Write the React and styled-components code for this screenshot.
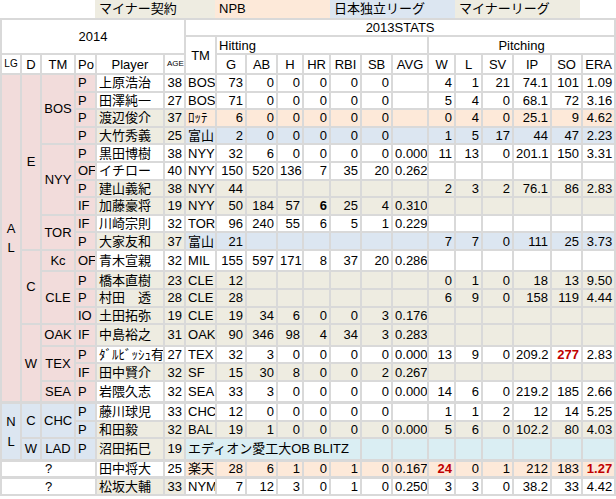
import React from "react";
import styled, { createGlobalStyle } from "styled-components";

const Global = createGlobalStyle`
  body { margin: 0; background: #fff; font-family: "Liberation Sans", "Noto Sans CJK JP", sans-serif; font-size: 13px; color: #000; }
`;

const C = {
  pink: "#f2dcdb",
  npb: "#fde9d9",
  ind: "#dce6f1",
  tan: "#eeece1",
  cyan: "#daeef3",
  white: "#fff",
  line: "#d9d9d9",
  red: "#c00000",
};

const Legend = styled.div`
  display: flex;
  height: 18px;
  line-height: 18px;
`;

const Swatch = styled.div`
  width: ${(p) => p.w}px;
  background: ${(p) => p.bg};
  padding-left: 4px;
  box-sizing: border-box;
`;

const Table = styled.table`
  border-collapse: collapse;
  table-layout: fixed;
  width: 616px;
  border: 2px solid ${C.line};
`;

const Tr = styled.tr`
  height: ${(p) => p.h || 17.6}px;
  border-top: ${(p) => (p.sep ? `3px solid ${C.line}` : "none")};
`;

const Td = styled.td`
  border: 2px solid ${C.line};
  padding: 0 2px;
  line-height: 1;
  white-space: nowrap;
  overflow: ${(p) => (p.spill ? "visible" : "hidden")};
  background: ${(p) => p.bg || C.white};
  text-align: ${(p) => p.al || "right"};
  color: ${(p) => (p.red ? C.red : "#000")};
  font-weight: ${(p) => (p.bold || p.red ? "bold" : "normal")};
  font-size: ${(p) => p.fs || 13}px;
  vertical-align: middle;
`;

const widths = [20, 20, 34, 21, 68, 21, 31, 30, 31, 26, 27, 31, 31, 36, 27, 27, 31, 38, 31, 33];

const E = "";
// pb: player bg, sb: stats bg, s: G AB H HR RBI SB AVG W L SV IP SO ERA
const rows = [
  { po: "P", name: "上原浩治", age: 38, tm: "BOS", pb: C.white, sb: C.white, s: [73, 0, 0, 0, 0, 0, E, 4, 1, 21, "74.1", 101, "1.09"] },
  { po: "P", name: "田澤純一", age: 27, tm: "BOS", pb: C.white, sb: C.white, s: [71, 0, 0, 0, 0, 0, E, 5, 4, 0, "68.1", 72, "3.16"] },
  { po: "P", name: "渡辺俊介", age: 37, tm: "ﾛｯﾃ", pb: C.tan, sb: C.npb, s: [6, 0, 0, 0, 0, 0, E, 0, 4, 0, "25.1", 9, "4.62"] },
  { po: "P", name: "大竹秀義", age: 25, tm: "富山", pb: C.tan, sb: C.ind, s: [2, 0, 0, 0, 0, 0, E, 1, 5, 17, 44, 47, "2.23"] },
  { po: "P", name: "黒田博樹", age: 38, tm: "NYY", pb: C.white, sb: C.white, s: [32, 6, 0, 0, 0, 0, "0.000", 11, 13, 0, "201.1", 150, "3.31"] },
  { po: "OF", name: "イチロー", age: 40, tm: "NYY", pb: C.white, sb: C.white, s: [150, 520, 136, 7, 35, 20, "0.262", E, E, E, E, E, E] },
  { po: "P", name: "建山義紀", age: 38, tm: "NYY", pb: C.tan, sb: C.tan, s: [44, E, E, E, E, E, E, 2, 3, 2, "76.1", 86, "2.83"] },
  { po: "IF", name: "加藤豪将", age: 19, tm: "NYY", pb: C.tan, sb: C.tan, s: [50, 184, 57, 6, 25, 4, "0.310", E, E, E, E, E, E], boldHR: true },
  { po: "IF", name: "川崎宗則", age: 32, tm: "TOR", pb: C.white, sb: C.white, s: [96, 240, 55, 6, 5, 1, "0.229", E, E, E, E, E, E] },
  { po: "P", name: "大家友和", age: 37, tm: "富山", pb: C.tan, sb: C.ind, s: [21, E, E, E, E, E, E, 7, 7, 0, 111, 25, "3.73"] },
  { po: "OF", name: "青木宣親", age: 32, tm: "MIL", pb: C.white, sb: C.white, s: [155, 597, 171, 8, 37, 20, "0.286", E, E, E, E, E, E] },
  { po: "P", name: "橋本直樹", age: 23, tm: "CLE", pb: C.tan, sb: C.tan, s: [12, E, E, E, E, E, E, 0, 1, 0, 18, 13, "9.50"] },
  { po: "P", name: "村田　透", age: 28, tm: "CLE", pb: C.tan, sb: C.tan, s: [28, E, E, E, E, E, E, 6, 9, 0, 158, 119, "4.44"] },
  { po: "IO", name: "土田拓弥", age: 19, tm: "CLE", pb: C.tan, sb: C.tan, s: [19, 34, 6, 0, 0, 3, "0.176", E, E, E, E, E, E] },
  { po: "IF", name: "中島裕之", age: 31, tm: "OAK", pb: C.tan, sb: C.tan, s: [90, 346, 98, 4, 34, 3, "0.283", E, E, E, E, E, E] },
  { po: "P", name: "ﾀﾞﾙﾋﾞｯｼｭ有", age: 27, tm: "TEX", pb: C.white, sb: C.white, s: [32, 3, 0, 0, 0, 0, "0.000", 13, 9, 0, "209.2", 277, "2.83"], red: [11] },
  { po: "IF", name: "田中賢介", age: 32, tm: "SF", pb: C.tan, sb: C.tan, s: [15, 30, 8, 0, 0, 2, "0.267", E, E, E, E, E, E] },
  { po: "P", name: "岩隈久志", age: 32, tm: "SEA", pb: C.white, sb: C.white, s: [33, 3, 0, 0, 0, 0, "0.000", 14, 6, 0, "219.2", 185, "2.66"] },
  { po: "P", name: "藤川球児", age: 33, tm: "CHC", pb: C.white, sb: C.white, s: [12, 0, 0, 0, 0, 0, E, 1, 1, 2, 12, 14, "5.25"], sep: true },
  { po: "P", name: "和田毅", age: 32, tm: "BAL", pb: C.tan, sb: C.tan, s: [19, 1, 0, 0, 0, 0, "0.000", 5, 6, 0, "102.2", 80, "4.03"] },
  { po: "P", name: "沼田拓巳", age: 19, merged: "エディオン愛工大OB BLITZ", pb: C.tan, sb: C.cyan },
  { q: true, name: "田中将大", age: 25, tm: "楽天", pb: C.white, sb: C.npb, s: [28, 6, 1, 0, 1, 0, "0.167", 24, 0, 1, 212, 183, "1.27"], red: [7, 12], sep: true },
  { q: true, name: "松坂大輔", age: 33, tm: "NYM", pb: C.tan, sb: C.white, s: [7, 12, 3, 0, 1, 0, "0.250", 3, 3, 0, "38.2", 33, "4.42"], sep: true },
];

// league / division / team cells that start on a given row
const lead = {
  0: [
    { t: "A\nL", rs: 18, bg: C.pink },
    { t: "E", rs: 10, bg: C.pink },
    { t: "BOS", rs: 4, bg: C.pink },
  ],
  4: [{ t: "NYY", rs: 4, bg: C.pink }],
  8: [{ t: "TOR", rs: 2, bg: C.pink }],
  10: [
    { t: "C", rs: 4, bg: C.pink },
    { t: "Kc", rs: 1, bg: C.pink },
  ],
  11: [{ t: "CLE", rs: 3, bg: C.pink }],
  14: [
    { t: "W", rs: 4, bg: C.pink },
    { t: "OAK", rs: 1, bg: C.pink },
  ],
  15: [{ t: "TEX", rs: 2, bg: C.pink }],
  17: [{ t: "SEA", rs: 1, bg: C.pink }],
  18: [
    { t: "N\nL", rs: 3, bg: C.ind },
    { t: "C", rs: 2, bg: C.ind },
    { t: "CHC", rs: 2, bg: C.ind },
  ],
  20: [
    { t: "W", rs: 1, bg: C.ind },
    { t: "LAD", rs: 1, bg: C.ind },
  ],
};

const LeadText = styled.span`
  white-space: pre-line;
  line-height: 1.5;
`;

function DataRow({ r, i }) {
  const poBg = i >= 18 ? C.ind : C.pink;
  return (
    <Tr sep={r.sep}>
      {r.q ? (
        <Td colSpan={4} al="center">?</Td>
      ) : (
        <>
          {(lead[i] || []).map((c, k) => (
            <Td key={k} rowSpan={c.rs} bg={c.bg} al="center">
              <LeadText>{c.t}</LeadText>
            </Td>
          ))}
          <Td bg={poBg} al="left">{r.po}</Td>
        </>
      )}
      <Td bg={r.pb} al="left">{r.name}</Td>
      <Td bg={r.pb}>{r.age}</Td>
      {r.merged ? (
        <>
          <Td colSpan={6} bg={r.sb} al="left">{r.merged}</Td>
          {Array.from({ length: 8 }).map((_, k) => (
            <Td key={k} bg={r.sb} />
          ))}
        </>
      ) : (
        <>
          <Td bg={r.sb} al="left">{r.tm}</Td>
          {r.s.map((v, k) => (
            <Td key={k} bg={r.sb} red={r.red && r.red.includes(k)} bold={r.boldHR && k === 3}>
              {v}
            </Td>
          ))}
        </>
      )}
    </Tr>
  );
}

const heads = ["G", "AB", "H", "HR", "RBI", "SB", "AVG", "W", "L", "SV", "IP", "SO", "ERA"];

export default function App() {
  return (
    <>
      <Global />
      <Legend>
        <Swatch w={95} bg={C.white} />
        <Swatch w={120} bg={C.tan}>マイナー契約</Swatch>
        <Swatch w={115} bg={C.npb}>NPB</Swatch>
        <Swatch w={125} bg={C.ind}>日本独立リーグ</Swatch>
        <Swatch w={125} bg={C.tan}>マイナーリーグ</Swatch>
      </Legend>
      <Table>
        <colgroup>
          {widths.map((w, k) => (
            <col key={k} style={{ width: w }} />
          ))}
        </colgroup>
        <tbody>
          <Tr h={17}>
            <Td colSpan={6} rowSpan={2} al="center">2014</Td>
            <Td colSpan={14} al="center">2013STATS</Td>
          </Tr>
          <Tr h={18}>
            <Td rowSpan={2} al="center">TM</Td>
            <Td colSpan={7} al="left">Hitting</Td>
            <Td colSpan={6} al="center">Pitching</Td>
          </Tr>
          <Tr h={20}>
            <Td al="center" fs={10}>LG</Td>
            <Td al="center">D</Td>
            <Td al="center">TM</Td>
            <Td al="center">Po</Td>
            <Td al="center">Player</Td>
            <Td al="center" fs={8}>AGE</Td>
            {heads.map((h) => (
              <Td key={h} al="center">{h}</Td>
            ))}
          </Tr>
          {rows.map((r, i) => (
            <DataRow key={i} r={r} i={i} />
          ))}
        </tbody>
      </Table>
    </>
  );
}
